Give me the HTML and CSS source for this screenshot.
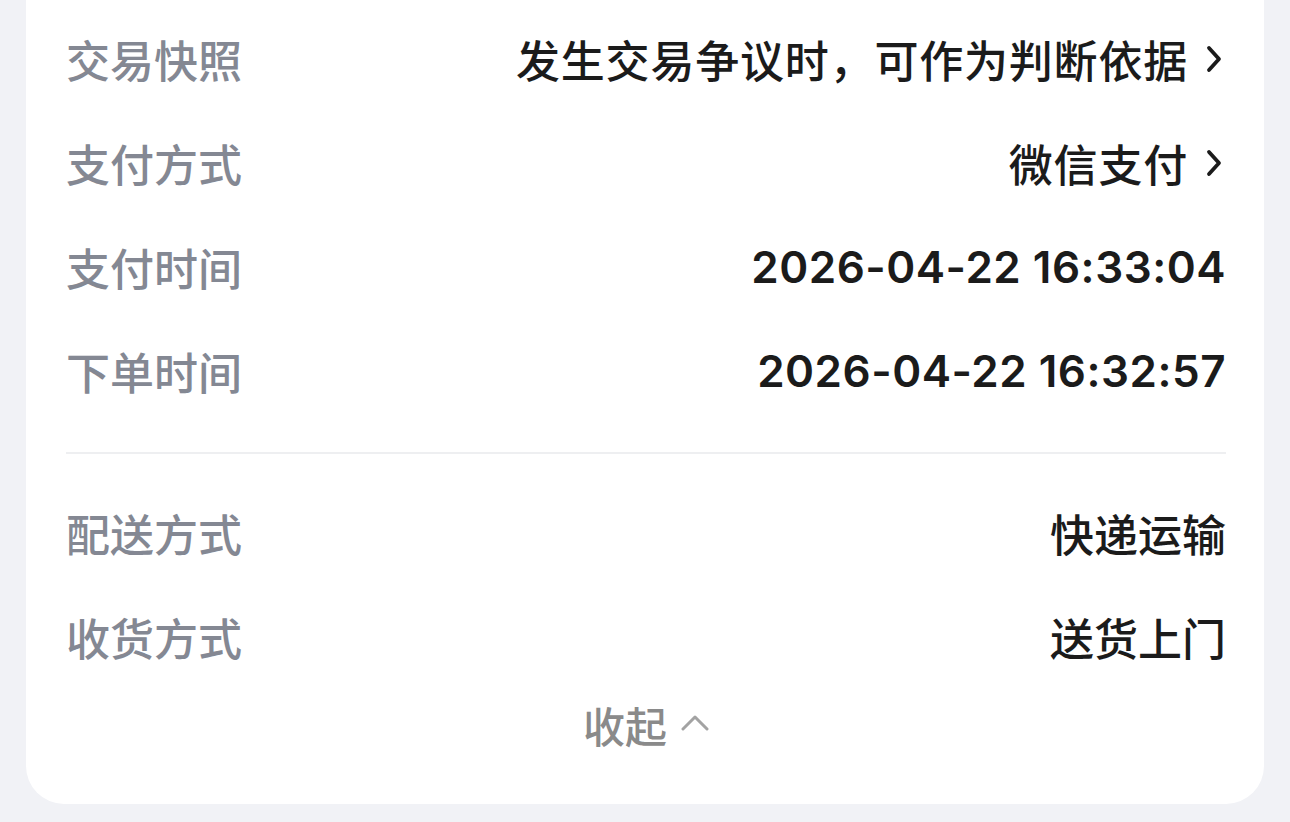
FILE: index.html
```html
<!DOCTYPE html>
<html lang="zh-CN">
<head>
<meta charset="utf-8">
<title>订单信息</title>
<link rel="stylesheet" href="styles.css">
</head>
<body>
<div class="card">
  <div class="group">
    <div class="row">
      <span class="label">交易快照</span>
      <span class="value link">发生交易争议时，可作为判断依据<svg class="chev" viewBox="0 0 16 28" width="16" height="28"><path d="M3 3 L13 14 L3 25" fill="none" stroke="#1b1b1b" stroke-width="3.8" stroke-linecap="round" stroke-linejoin="round"/></svg></span>
    </div>
    <div class="row">
      <span class="label">支付方式</span>
      <span class="value link">微信支付<svg class="chev" viewBox="0 0 16 28" width="16" height="28"><path d="M3 3 L13 14 L3 25" fill="none" stroke="#1b1b1b" stroke-width="3.8" stroke-linecap="round" stroke-linejoin="round"/></svg></span>
    </div>
    <div class="row">
      <span class="label">支付时间</span>
      <span class="value num">2026-04-22 16:33:04</span>
    </div>
    <div class="row">
      <span class="label">下单时间</span>
      <span class="value num">2026-04-22 16:32:57</span>
    </div>
  </div>
  <div class="divider"></div>
  <div class="group">
    <div class="row">
      <span class="label">配送方式</span>
      <span class="value">快递运输</span>
    </div>
    <div class="row">
      <span class="label">收货方式</span>
      <span class="value">送货上门</span>
    </div>
  </div>
  <div class="collapse">
    <span class="collapse-text">收起</span>
    <svg class="up" viewBox="0 0 28 18" width="28" height="18"><path d="M2 15 L14 3 L26 15" fill="none" stroke="#a3a3a3" stroke-width="3" stroke-linecap="round" stroke-linejoin="round"/></svg>
  </div>
</div>
</body>
</html>
```
FILE: styles.css
```css
html, body {
  margin: 0;
  padding: 0;
}
body {
  background: #f1f2f6;
  font-family: "Noto Sans CJK SC", "Noto Sans", sans-serif;
  height: 822px;
  overflow: hidden;
}
.card {
  margin: 0 26px 0 26px;
  background: #ffffff;
  border-radius: 0 0 38px 38px;
  padding: 7px 38px 43px 40px;
}
.group {
  display: flex;
  flex-direction: column;
}
.row {
  height: 104px;
  display: flex;
  align-items: center;
  justify-content: space-between;
}
.label {
  font-size: 44px;
  color: #848893;
  font-weight: 500;
  line-height: 1;
}
.value {
  font-size: 44px;
  color: #1b1b1b;
  font-weight: 500;
  line-height: 1;
  display: flex;
  align-items: center;
}
.link {
  letter-spacing: 0.8px;
}
.num {
  font-family: "Inter", "Noto Sans CJK SC", sans-serif;
  font-size: 44px;
  font-weight: 600;
  letter-spacing: 0.5px;
}
.chev {
  margin-left: 18px;
  margin-right: 4px;
}
.divider {
  height: 2px;
  background: #eeeff1;
  margin: 29px 0 27px 0;
}
.collapse {
  height: 72px;
  display: flex;
  align-items: center;
  justify-content: center;
  gap: 14px;
}
.collapse-text {
  font-size: 42px;
  color: #8a8a8a;
  font-weight: 500;
  line-height: 1;
}
.up {
  margin-top: -4px;
}
```
